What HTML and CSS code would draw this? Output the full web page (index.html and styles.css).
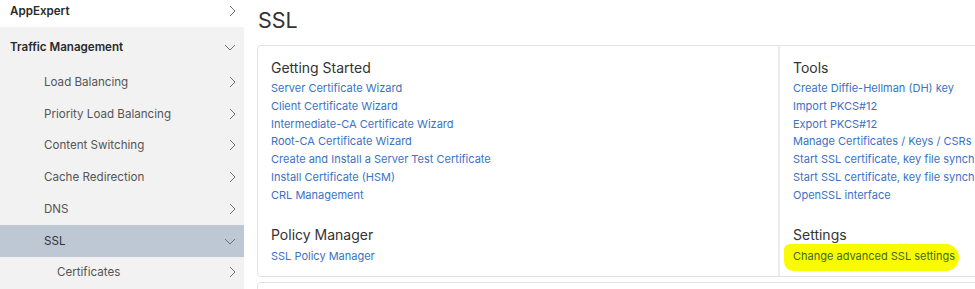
FILE: index.html
```html
<!DOCTYPE html>
<html lang="en">
<head>
    <meta charset="UTF-8">
    <title>SSL</title>
    <link rel="stylesheet" href="styles.css">
</head>
<body>
    <nav class="sidebar">
        <div class="nav-row top">
            <span>AppExpert</span>
            <svg class="chev" width="8" height="12" viewBox="0 0 8 12"><polyline points="2,1 7,6 2,11"/></svg>
        </div>
        <div class="nav-row group">
            <span>Traffic Management</span>
            <svg class="chev" width="12" height="8" viewBox="0 0 12 8"><polyline points="1,2 6,7 11,2"/></svg>
        </div>
        <div class="nav-row sub">
            <span>Load Balancing</span>
            <svg class="chev" width="8" height="12" viewBox="0 0 8 12"><polyline points="2,1 7,6 2,11"/></svg>
        </div>
        <div class="nav-row sub">
            <span>Priority Load Balancing</span>
            <svg class="chev" width="8" height="12" viewBox="0 0 8 12"><polyline points="2,1 7,6 2,11"/></svg>
        </div>
        <div class="nav-row sub">
            <span>Content Switching</span>
            <svg class="chev" width="8" height="12" viewBox="0 0 8 12"><polyline points="2,1 7,6 2,11"/></svg>
        </div>
        <div class="nav-row sub">
            <span>Cache Redirection</span>
            <svg class="chev" width="8" height="12" viewBox="0 0 8 12"><polyline points="2,1 7,6 2,11"/></svg>
        </div>
        <div class="nav-row sub">
            <span>DNS</span>
            <svg class="chev" width="8" height="12" viewBox="0 0 8 12"><polyline points="2,1 7,6 2,11"/></svg>
        </div>
        <div class="nav-row sub active">
            <span>SSL</span>
            <svg class="chev" width="12" height="8" viewBox="0 0 12 8"><polyline points="1,2 6,7 11,2"/></svg>
        </div>
        <div class="nav-row subsub">
            <span>Certificates</span>
            <svg class="chev" width="8" height="12" viewBox="0 0 8 12"><polyline points="2,1 7,6 2,11"/></svg>
        </div>
    </nav>

    <main class="main">
        <h1 class="page-title">SSL</h1>

        <div class="card">
            <div class="col left">
                <div class="section">
                    <h2>Getting Started</h2>
                    <a href="#">Server Certificate Wizard</a>
                    <a href="#">Client Certificate Wizard</a>
                    <a href="#">Intermediate-CA Certificate Wizard</a>
                    <a href="#">Root-CA Certificate Wizard</a>
                    <a href="#">Create and Install a Server Test Certificate</a>
                    <a href="#">Install Certificate (HSM)</a>
                    <a href="#">CRL Management</a>
                </div>
                <div class="section">
                    <h2>Policy Manager</h2>
                    <a href="#">SSL Policy Manager</a>
                </div>
            </div>
            <div class="col right">
                <div class="section">
                    <h2>Tools</h2>
                    <a href="#">Create Diffie-Hellman (DH) key</a>
                    <a href="#">Import PKCS#12</a>
                    <a href="#">Export PKCS#12</a>
                    <a href="#">Manage Certificates / Keys / CSRs</a>
                    <a href="#">Start SSL certificate, key file synchronization</a>
                    <a href="#">Start SSL certificate, key file synchronization (HSM)</a>
                    <a href="#">OpenSSL interface</a>
                </div>
                <div class="section">
                    <h2>Settings</h2>
                    <a href="#" class="marked">Change advanced SSL settings</a>
                </div>
            </div>
        </div>

        <div class="card next"></div>
    </main>
</body>
</html>
```

FILE: styles.css
```css
body {
    margin: 0;
    display: flex;
    height: 289px;
    overflow: hidden;
    font-family: Inter, "Noto Sans", sans-serif;
    color: #333;
    background: #fff;
}
.sidebar {
    width: 244px;
    flex-shrink: 0;
    background: #f2f2f2;
    margin-top: -5px;
}
.nav-row {
    display: flex;
    align-items: center;
    justify-content: space-between;
    height: 31.75px;
    padding: 0 8px 0 10px;
    font-size: 11.6px;
    color: #555;
}
.nav-row.top {
    height: 32px;
    background: #fff;
    font-weight: 600;
    color: #2a2a2a;
}
.nav-row.group {
    height: 39px;
    font-weight: 600;
    color: #2a2a2a;
}
.nav-row.sub {
    padding-left: 44px;
}
.nav-row.subsub {
    padding-left: 57px;
}
.nav-row.active {
    background: #bec8d4;
    color: #333;
}
.chev {
    fill: none;
    stroke: #707070;
    stroke-width: 1;
}
.main {
    flex: 1;
    overflow: hidden;
    padding-left: 13px;
}
.page-title {
    margin: 8px 0 13px 1px;
    font-size: 21.5px;
    font-weight: 400;
    line-height: 24px;
    color: #333;
}
.card {
    display: flex;
    width: 900px;
    border: 1px solid #e2e2e2;
    border-radius: 4px;
}
.card.next {
    height: 40px;
    margin-top: 5px;
}
.col {
    padding: 12px 13px 10px 13px;
}
.col.left {
    width: 494px;
    border-right: 2px solid #ececec;
}
.section {
    display: flex;
    flex-direction: column;
    align-items: flex-start;
}
.section + .section {
    margin-top: 21px;
}
h2 {
    margin: 0 0 2px 0;
    font-size: 14px;
    font-weight: 400;
    line-height: 20px;
    color: #333;
}
.section + .section h2 {
    margin-bottom: 3px;
}
a {
    font-size: 11px;
    line-height: 17.75px;
    color: #3a72c4;
    text-decoration: none;
    white-space: nowrap;
}
.marked {
    background: #fafa00;
    color: #3f6b2a;
    margin: -4px 0 -5px -9px;
    padding: 4px 4px 5px 9px;
    border-radius: 6px 14px 14px 10px;
}
```
